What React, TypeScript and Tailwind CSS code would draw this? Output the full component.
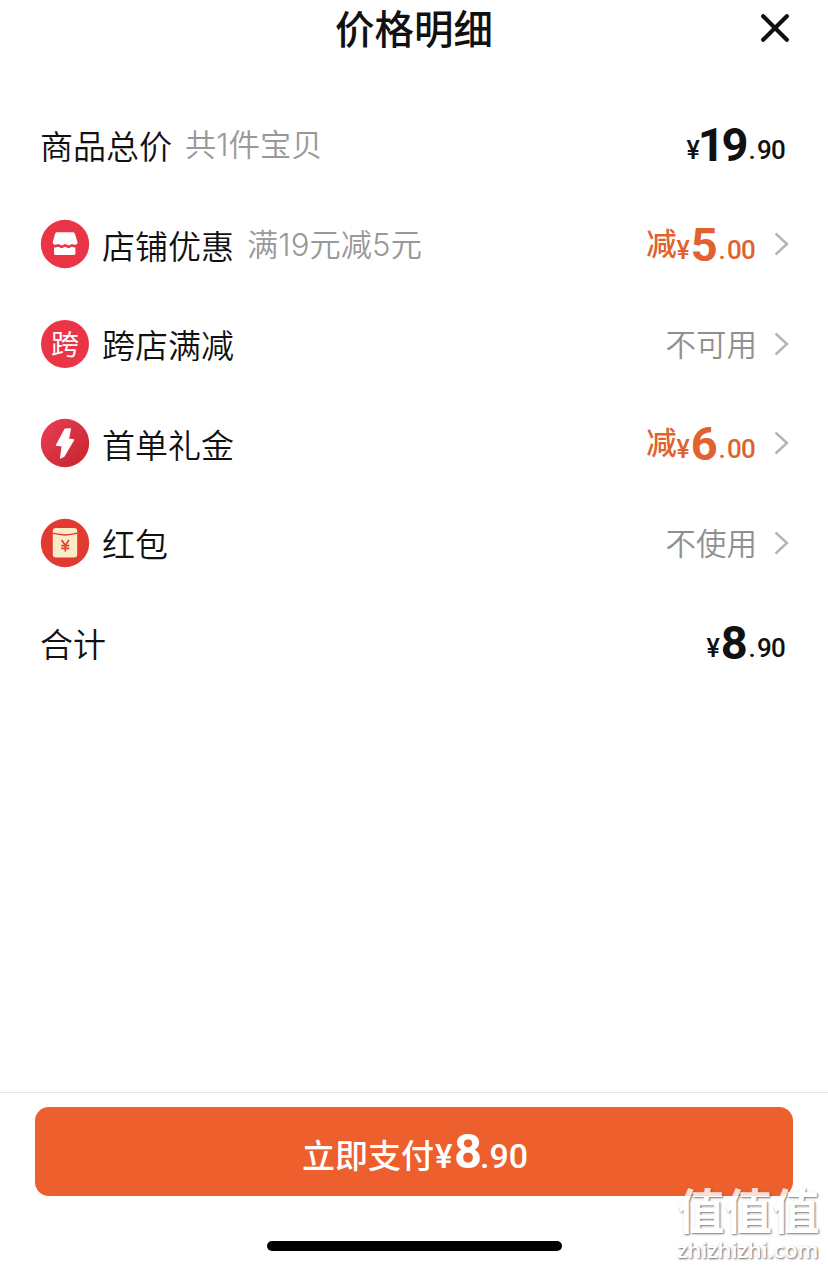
import { ReactNode } from 'react';

interface PriceProps {
  integer: string;
  decimal: string;
  prefix?: string;
}

function Price({ integer, decimal, prefix }: PriceProps) {
  return (
    <div className="relative -top-[2px] flex items-baseline leading-none font-['Roboto','Noto_Sans_CJK_SC',sans-serif]">
      {prefix && <span className="relative -top-[4px] text-[30.5px] font-medium">{prefix}</span>}
      <span className="-ml-px w-[15px] text-center text-[25px] font-medium">¥</span>
      <span
        className={`relative top-[2px] text-[47px] font-bold ${integer.length > 1 ? '-ml-[3px] tracking-[-3px]' : 'tracking-[-2px]'}`}
      >
        {integer}
      </span>
      <span className="mr-[2px] ml-[3px] text-[26px] font-medium tracking-[-0.8px]">
        <span className="mr-[2px]">.</span>
        {decimal}
      </span>
    </div>
  );
}

function Chevron() {
  return (
    <svg className="relative ml-[16px] -mr-[4px] shrink-0" width="18" height="26" viewBox="0 0 18 26" fill="none">
      <path d="M2.5 2.5 14 13 2.5 23.5" stroke="#b4b4b4" strokeWidth="2.4" />
    </svg>
  );
}

function ShopIcon() {
  return (
    <svg width="50" height="50" viewBox="0 0 50 50">
      <circle cx="25" cy="25" r="24.2" fill="#e93545" />
      <path
        d="M16.600 13.200h16.400a2 2 0 0 1 1.800 1.200l2.600 8.400c.5 1.700-.7 3-2.300 3-1.500 0-2-.9-3.100-.9s-1.800 1.400-3.400 1.400-2-1.400-3.400-1.400-2 1.400-3.500 1.400-2-1.400-3.300-1.400-1.700.9-3.200.9c-1.700 0-2.800-1.300-2.300-3l2.300-8.400a2 2 0 0 1 1.400-1.200Z"
        fill="#fff"
      />
      <path
        d="M14 28.600c1.600.2 2.900-.9 4.300-.9 1.500 0 1.900 1.400 3.400 1.400s2-1.400 3.400-1.400 1.900 1.400 3.400 1.400 2-1.400 3.400-1.400 2 1.100 3.500.9v6a1.400 1.400 0 0 1-1.400 1.400H15.400a1.400 1.400 0 0 1-1.400-1.400Z"
        fill="#fff"
      />
    </svg>
  );
}

function CrossShopIcon() {
  return (
    <span className="flex h-[48.5px] w-[48.5px] items-center justify-center rounded-full bg-[#e93545] text-[28px] leading-none text-white">
      <span className="relative top-px">跨</span>
    </span>
  );
}

function BoltIcon() {
  return (
    <svg width="50" height="50" viewBox="0 0 50 50">
      <defs>
        <linearGradient id="bolt-bg" x1="0" y1="0" x2="1" y2="1">
          <stop offset="0.1" stopColor="#e63c52" />
          <stop offset="0.9" stopColor="#c9262f" />
        </linearGradient>
      </defs>
      <circle cx="25" cy="25" r="24.2" fill="url(#bolt-bg)" />
      <path
        d="M25 11.200 30.400 10.800 28.400 21.200 33.800 21.800 24 38.200 20.600 40 22.200 28 16.400 27.200Z"
        fill="#fff"
        stroke="#fff"
        strokeWidth="1.2"
        strokeLinejoin="round"
      />
    </svg>
  );
}

function RedPacketIcon() {
  return (
    <svg width="50" height="50" viewBox="0 0 50 50">
      <circle cx="25" cy="25" r="24.2" fill="#e13a30" />
      <rect x="12.8" y="10" width="24.400" height="29.600" rx="3" fill="#fcebc8" />
      <path d="M12.800 15.200Q25 18.800 37.200 15.200" fill="none" stroke="#e13a30" strokeWidth="1.3" />
      <path d="m21.600 22 3.700 5.200 3.700-5.200M25.300 27v6.400M21.200 27.600h8.200M21.200 30.400h8.200" fill="none" stroke="#d9472f" strokeWidth="1.7" />
    </svg>
  );
}

interface RowProps {
  icon?: ReactNode;
  label: string;
  note?: string;
  link?: boolean;
  children: ReactNode;
}

function Row({ icon, label, note, link, children }: RowProps) {
  return (
    <div className="flex h-[99.5px] items-center pr-[41px] pl-10">
      {icon && <span className="mr-[12px] flex w-[50px] shrink-0 justify-center">{icon}</span>}
      <span className="relative top-[3px] text-[33px] leading-none font-[350] text-[#111]">{label}</span>
      {note && (
        <span className="relative top-px ml-[13px] text-[31.2px] leading-none font-[350] tracking-[0.1px] text-[#999]">
          {note}
        </span>
      )}
      <div className="ml-auto flex items-center">
        {children}
        {link && <Chevron />}
      </div>
    </div>
  );
}

function Status({ children }: { children: ReactNode }) {
  return <span className="relative top-px text-[30.5px] leading-none font-[350] text-[#909090]">{children}</span>;
}

export default function App() {
  return (
    <div className="relative flex h-[1268px] w-[828px] flex-col overflow-hidden bg-white text-[#111] font-['Inter','Noto_Sans_CJK_SC',sans-serif]">
      <header className="relative flex h-[60px] items-center justify-center">
        <h1 className="relative top-px text-[39.5px] leading-none font-medium">价格明细</h1>
        <button className="absolute top-[14px] right-[39px]">
          <svg width="28" height="28" viewBox="0 0 28 28" fill="none">
            <path d="M2.200 2.200 25.800 25.800M25.800 2.200 2.200 25.800" stroke="#111" strokeWidth="4.2" strokeLinecap="round" />
          </svg>
        </button>
      </header>

      <main className="flex-1 pt-[35px]">
        <Row label="商品总价" note="共1件宝贝">
          <Price integer="19" decimal="90" />
        </Row>
        <Row icon={<ShopIcon />} label="店铺优惠" note="满19元减5元" link>
          <div className="text-[#df622f]">
            <Price prefix="减" integer="5" decimal="00" />
          </div>
        </Row>
        <Row icon={<CrossShopIcon />} label="跨店满减" link>
          <Status>不可用</Status>
        </Row>
        <Row icon={<BoltIcon />} label="首单礼金" link>
          <div className="text-[#df622f]">
            <Price prefix="减" integer="6" decimal="00" />
          </div>
        </Row>
        <Row icon={<RedPacketIcon />} label="红包" link>
          <Status>不使用</Status>
        </Row>
        <Row label="合计">
          <Price integer="8" decimal="90" />
        </Row>
      </main>

      <footer className="flex h-[176px] flex-col items-center border-t border-[#e6e6e6] pt-[14px]">
        <button className="flex h-[89px] w-[758px] items-baseline justify-center rounded-[14px] bg-[#ed5f2c] pt-[20px] pl-[2px] text-white">
          <span className="text-[33px] leading-none font-medium">立即支付</span>
          <span className="flex items-baseline leading-none font-['Roboto',sans-serif]">
            <span className="w-[20px] text-center text-[33px] font-medium">¥</span>
            <span className="text-[49px] font-bold tracking-[-2px]">8</span>
            <span className="text-[34px] font-medium">.90</span>
          </span>
        </button>
        <div className="mt-[45px] h-[10px] w-[295px] rounded-full bg-black" />
      </footer>

      {/* Site watermark */}
      <div className="absolute top-[1186px] left-[677px] text-white">
        <div className="text-[47.5px] leading-[52px] font-bold opacity-80 [text-shadow:1px_1px_2px_#555]">值值值</div>
        <div className="mt-[-1px] text-[22px] leading-[24px] font-semibold tracking-[-0.15px] [text-shadow:1px_1px_2px_#666] font-['Open_Sans',sans-serif]">
          zhizhizhi.com
        </div>
      </div>
    </div>
  );
}
